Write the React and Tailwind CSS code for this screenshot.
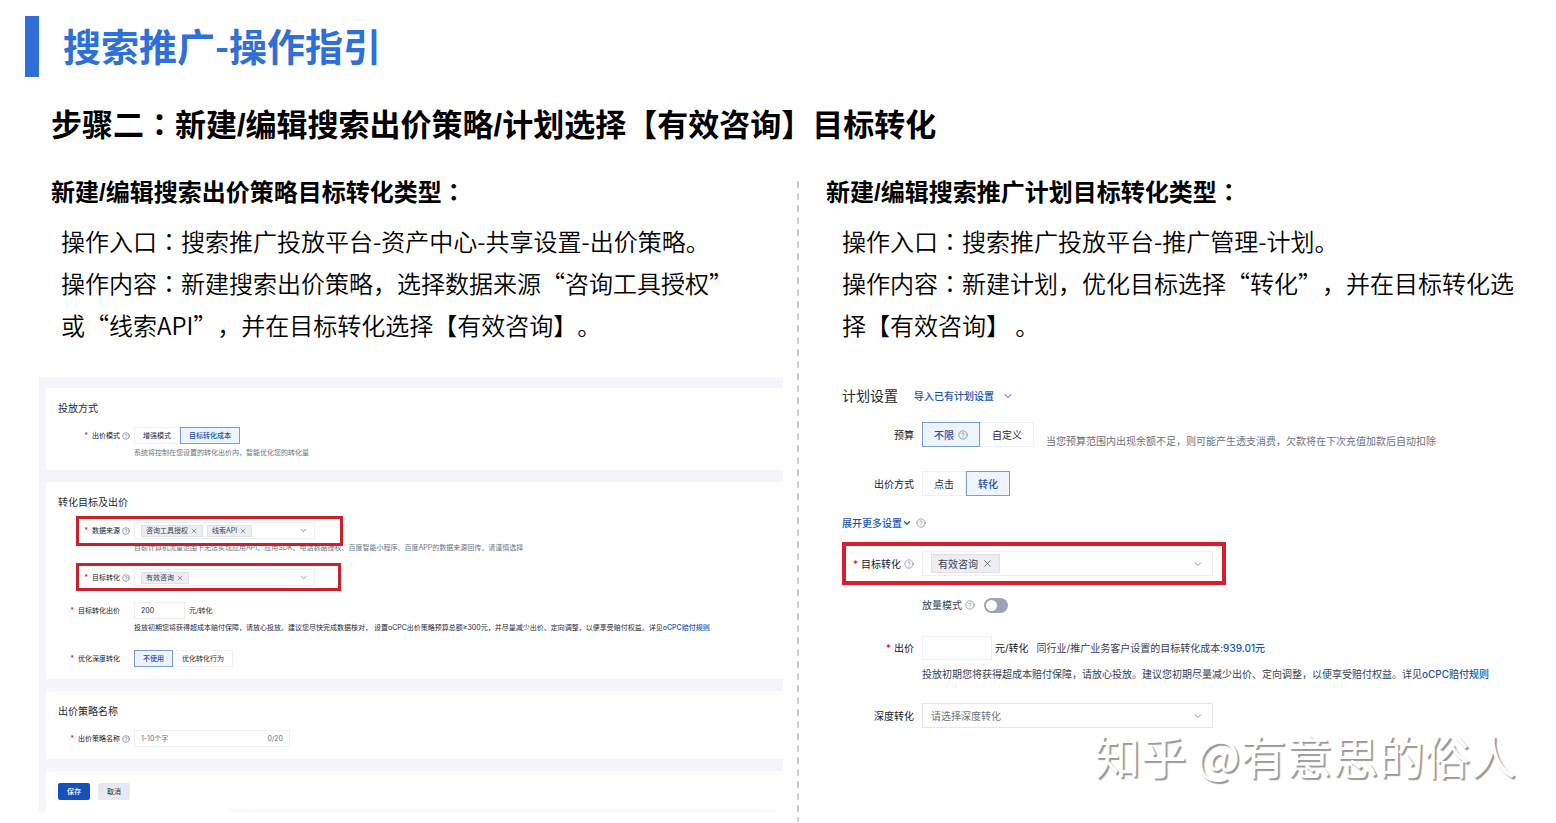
import { useState } from 'react';
import { ChevronDown, CircleHelp, X } from 'lucide-react';

const FONT_SLIDE = "font-['Noto_Sans_CJK_SC',sans-serif]";
const FONT_HEADING = "font-['Liberation_Sans','Noto_Sans_CJK_SC',sans-serif]";
const FONT_FORM = "font-['Inter','Noto_Sans_CJK_SC',sans-serif]";

// Colon centred in its cell
const Colon = () => <span className="font-['Noto_Sans_CJK_TC',sans-serif]">：</span>;

const Help = ({ small }) => (
  <CircleHelp
    className={small ? 'size-2 shrink-0 text-gray-500' : 'size-[10px] shrink-0 text-gray-500'}
    strokeWidth={small ? 2 : 1.5}
  />
);

const Segment = ({ options, value, onChange, small }) => (
  <div className="flex">
    {options.map((item) => (
      <button
        key={item.label}
        type="button"
        aria-pressed={value === item.label}
        onClick={() => onChange(item.label)}
        className={`flex items-center justify-center gap-1 border ${
          small ? 'h-[17px] px-2' : 'h-[25px] px-[11px]'
        } ${
          value === item.label
            ? 'border-[#7a9fd0] bg-[#edf4fd] font-medium text-[#1c4fa8]'
            : 'border-[#f0f1f4] bg-white text-gray-800'
        }`}
      >
        {item.label}
        {item.help && <Help />}
      </button>
    ))}
  </div>
);

const TagSelect = ({ id, tags, small }) => (
  <div
    className={`flex items-center border border-[#eceef2] bg-white ${
      small ? 'h-[17px] w-[181px] gap-1 px-[6px]' : 'h-[25px] w-[291px] px-2'
    }`}
  >
    {tags.map((tag) => (
      <span
        key={tag}
        className={`flex items-center border border-[#dfe1e6] bg-[#eceef2] text-gray-700 ${
          small ? 'h-3 gap-[2px] px-1' : 'h-[19px] gap-1 px-[6px]'
        }`}
      >
        {tag}
        <button type="button" aria-label={`移除${tag}`}>
          <X className={small ? 'size-[8px]' : 'size-[11px]'} strokeWidth={1.5} />
        </button>
      </span>
    ))}
    <button id={id} type="button" aria-label="展开选项" className="ml-auto">
      <ChevronDown
        className={small ? 'size-[9px] text-gray-500' : 'size-3 text-gray-500'}
        strokeWidth={small ? 2 : 1.5}
      />
    </button>
  </div>
);

const Card = ({ title, children }) => (
  <section className="bg-white px-3 pt-3">
    {title && <h4 className="text-[10px] leading-4 text-gray-800">{title}</h4>}
    {children}
  </section>
);

const LeftRow = ({ label, htmlFor, help, className, children }) => (
  <div className={`relative flex h-[17px] items-center ${className}`}>
    <label htmlFor={htmlFor} className="flex w-[62px] shrink-0 justify-end gap-1 text-gray-900">
      <span className="text-red-600">*</span>
      {label}
    </label>
    <span className="flex w-[14px] shrink-0 justify-start pl-[2px]">{help && <Help small />}</span>
    {children}
  </div>
);

const RightRow = ({ label, htmlFor, required, help, className, children }) => (
  <div className={`relative flex h-[25px] items-center ${className}`}>
    <label htmlFor={htmlFor} className="mr-2 flex w-[72px] shrink-0 items-center justify-end gap-[3px] text-gray-900">
      {required && <span className="text-red-600">*</span>}
      {label}
      {help && <Help />}
    </label>
    {children}
  </div>
);

const StrategyPanel = () => {
  const [mode, setMode] = useState('目标转化成本');
  const [deep, setDeep] = useState('不使用');

  return (
    <div
      className={`relative mt-[31px] mr-[14px] ml-[39px] flex flex-col gap-3 bg-[#f4f5fa] pt-[11px] pl-[7px] text-[7px] leading-3 ${FONT_FORM}`}
    >
      <Card title="投放方式">
        <LeftRow label="出价模式" help className="mt-[11px]">
          <Segment
            small
            options={[{ label: '增强模式' }, { label: '目标转化成本' }]}
            value={mode}
            onChange={setMode}
          />
        </LeftRow>
        <p className="mt-[3px] pb-[11px] pl-[76px] text-gray-500">
          系统将控制在您设置的转化出价内，智能优化您的转化量
        </p>
      </Card>

      <Card title="转化目标及出价">
        <LeftRow label="数据来源" htmlFor="source" help className="mt-3">
          <TagSelect small id="source" tags={['咨询工具授权', '线索API']} />
          <span className="pointer-events-none absolute -top-[6px] left-[18px] h-[30px] w-[267px] border-3 border-[#c9202c]" />
        </LeftRow>
        <p className="mt-[3px] pl-[76px] text-gray-500">
          目前计算机流量范围下无法实现应用API、应用SDK、电话数据授权、百度智能小程序、百度APP的数据来源回传，请谨慎选择
        </p>
        <LeftRow label="目标转化" htmlFor="target" help className="mt-[15px]">
          <TagSelect small id="target" tags={['有效咨询']} />
          <span className="pointer-events-none absolute -top-[6px] left-[18px] h-[28px] w-[265px] border-3 border-[#c9202c]" />
        </LeftRow>
        <LeftRow label="目标转化出价" htmlFor="bid" className="mt-4">
          <input
            id="bid"
            defaultValue="200"
            className="h-[17px] w-[51px] border border-[#eceef2] px-[6px] text-gray-800"
          />
          <span className="ml-1 text-gray-800">元/转化</span>
        </LeftRow>
        <p className="mt-[3px] pl-[76px] whitespace-nowrap text-gray-800">
          投放初期您将获得超成本赔付保障，请放心投放。建议您尽快完成数据核对， 设置oCPC出价策略预算总额≥300元，并尽量减少出价、定向调整，以便享受赔付权益。详见
          <a href="#rule" className="font-medium text-[#1c55b0]">oCPC赔付规则</a>
        </p>
        <LeftRow label="优化深度转化" className="mt-4 mb-3">
          <Segment
            small
            options={[{ label: '不使用' }, { label: '优化转化行为' }]}
            value={deep}
            onChange={setDeep}
          />
        </LeftRow>
      </Card>

      <Card title="出价策略名称">
        <LeftRow label="出价策略名称" htmlFor="name" help className="mt-[11px] mb-3">
          <div className="flex h-[17px] w-[156px] items-center border border-[#eceef2] px-[6px]">
            <input id="name" placeholder="1-10个字" className="min-w-0 flex-1 placeholder:text-gray-500" />
            <span className="text-gray-500">0/20</span>
          </div>
        </LeftRow>
      </Card>

      <Card>
        <div className="flex gap-2 pb-3">
          <button type="button" className="h-[17px] w-8 rounded-[2px] bg-[#1650bd] font-medium text-white">
            保存
          </button>
          <button type="button" className="h-[17px] w-8 rounded-[2px] bg-[#e7e9f1] text-gray-800">
            取消
          </button>
        </div>
      </Card>
      <div className="absolute right-2 bottom-0 left-[190px] h-1 bg-linear-to-b from-white to-[#f6f6f7]" />
    </div>
  );
};

const PlanPanel = () => {
  const [budget, setBudget] = useState('不限');
  const [bidType, setBidType] = useState('转化');

  return (
    <div className={`mt-10 pl-4 text-[10px] leading-4 whitespace-nowrap text-gray-700 ${FONT_FORM}`}>
      <div className="flex h-5 items-center gap-4">
        <h4 className="text-[14px] text-gray-800">计划设置</h4>
        <button type="button" className="flex items-center gap-2 font-medium text-[#1c55b0]">
          导入已有计划设置
          <ChevronDown className="size-3" strokeWidth={2} />
        </button>
      </div>

      <RightRow label="预算" className="mt-4">
        <Segment
          options={[{ label: '不限', help: true }, { label: '自定义' }]}
          value={budget}
          onChange={setBudget}
        />
        <span className="ml-3 self-end leading-3 text-gray-500">
          当您预算范围内出现余额不足，则可能产生透支消费，欠款将在下次充值加款后自动扣除
        </span>
      </RightRow>

      <RightRow label="出价方式" className="mt-6">
        <Segment options={[{ label: '点击' }, { label: '转化' }]} value={bidType} onChange={setBidType} />
      </RightRow>

      <div className="mt-[19px] flex items-center gap-1">
        <button type="button" className="flex items-center font-medium text-[#1c55b0]">
          展开更多设置
          <ChevronDown className="size-[10px]" strokeWidth={3} />
        </button>
        <Help />
      </div>

      <RightRow label="目标转化" htmlFor="planTarget" required help className="mt-5">
        <TagSelect id="planTarget" tags={['有效咨询']} />
        <span className="pointer-events-none absolute -top-[9px] left-0 h-[43px] w-[384px] border-4 border-[#d81e2e]" />
      </RightRow>

      <div className="mt-[21px] flex h-4 items-center gap-[3px] pl-20">
        <label htmlFor="volume">放量模式</label>
        <Help />
        <span className="relative ml-[6px] h-[15px] w-6">
          <input
            id="volume"
            type="checkbox"
            role="switch"
            className="peer block h-[15px] w-6 appearance-none rounded-full bg-[#9da2b8] checked:bg-[#1c55b0]"
          />
          <span className="pointer-events-none absolute top-[2px] left-[2px] size-[11px] rounded-full bg-white peer-checked:left-[11px]" />
        </span>
      </div>

      <RightRow label="出价" htmlFor="planBid" required className="mt-[22px]">
        <input id="planBid" className="h-6 w-[70px] border border-[#eceef2] px-2" />
        <span className="ml-[3px] text-gray-900">元/转化</span>
        <span className="ml-2">
          同行业/推广业务客户设置的目标转化成本:
          <span className="font-medium text-[#1c55b0]">939.01元</span>
        </span>
      </RightRow>
      <p className="mt-[6px] pl-20">
        投放初期您将获得超成本赔付保障，请放心投放。建议您初期尽量减少出价、定向调整，以便享受赔付权益。详见
        <a href="#plan-rule" className="font-medium text-[#1c55b0]">oCPC赔付规则</a>
      </p>

      <RightRow label="深度转化" htmlFor="deep" className="mt-[21px]">
        <select
          id="deep"
          className="h-[25px] w-[291px] appearance-none border border-[#e4e6ea] bg-white px-2 text-gray-500"
        >
          <option>请选择深度转化</option>
        </select>
        <ChevronDown className="pointer-events-none -ml-[21px] size-3 text-gray-500" strokeWidth={1.5} />
      </RightRow>
    </div>
  );
};

const App = () => (
  <main className={`overflow-hidden bg-white text-black [text-spacing-trim:space-all] ${FONT_SLIDE}`}>
    <header className="flex items-start pt-4 pl-[25px]">
      <span className="h-[61px] w-[14px] bg-[#2f6fd9]" />
      <h1 className="ml-6 text-[38px] leading-[58px] font-bold text-[#2f6fd9]">搜索推广-操作指引</h1>
    </header>
    <h2 className={`mt-[26px] pl-[51px] text-[31px] leading-10 font-bold ${FONT_HEADING}`}>
      步骤二<Colon />新建/编辑搜索出价策略/计划选择【有效咨询】目标转化
    </h2>

    <div className="mt-[33px] grid grid-cols-[797fr_2px_757fr]">
      <div className="min-w-0 pb-[10px]">
        <h3 className={`pl-[51px] text-[24px] leading-6 font-bold ${FONT_HEADING}`}>
          新建/编辑搜索出价策略目标转化类型<Colon />
        </h3>
        <p className="mt-[15px] pl-[61px] text-[24px] leading-[42px] font-[350] whitespace-nowrap">
          操作入口<Colon />搜索推广投放平台-资产中心-共享设置-出价策略。
          <br />
          操作内容<Colon />新建搜索出价策略，选择数据来源“咨询工具授权”
          <br />
          或“线索API”，并在目标转化选择【有效咨询】。
        </p>
        <StrategyPanel />
      </div>

      <div className="mt-[2px] bg-[repeating-linear-gradient(to_bottom,#d0d0d0_0_7px,transparent_7px_12px)]" />

      <div className="min-w-0 pl-[27px]">
        <h3 className={`text-[24px] leading-6 font-bold ${FONT_HEADING}`}>
          新建/编辑搜索推广计划目标转化类型<Colon />
        </h3>
        <p className="mt-[15px] pl-4 text-[24px] leading-[42px] font-[350] whitespace-nowrap">
          操作入口<Colon />搜索推广投放平台-推广管理-计划。
          <br />
          操作内容<Colon />新建计划，优化目标选择“转化”，并在目标转化选
          <br />
          择【有效咨询】 。
        </p>
        <PlanPanel />
        <p className="mt-[3px] pr-10 text-right text-[46px] leading-[46px] text-white [text-shadow:2px_2px_1px_#999]">
          知乎 @有意思的俗人
        </p>
      </div>
    </div>
  </main>
);

export default App;
